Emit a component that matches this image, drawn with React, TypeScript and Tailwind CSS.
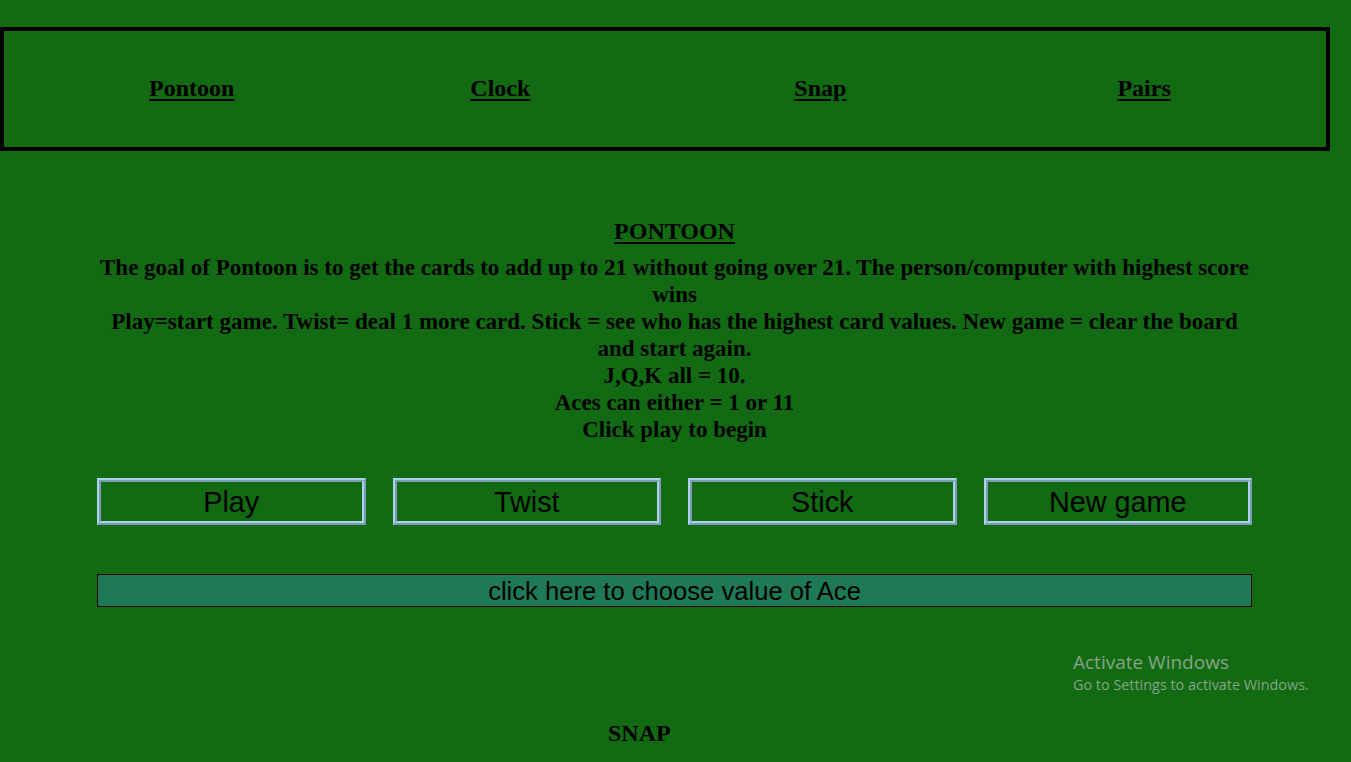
import React from "react";

const serif = { fontFamily: '"Liberation Serif", "Times New Roman", serif' };

function GameButton({ label }: { label: string }) {
  return (
    <button
      className="h-[47px] border-2 border-t-[#a9d3e9] border-l-[#a9d3e9] border-r-[#7e9db5] border-b-[#7e9db5] bg-transparent p-0"
      style={{ fontFamily: '"Liberation Sans", Arial, sans-serif' }}
    >
      <span className="flex h-full w-full items-center justify-center border-2 border-t-[#7e9db5] border-l-[#7e9db5] border-r-[#a9d3e9] border-b-[#a9d3e9] pt-[2px] text-[28.8px] leading-none text-black">
        {label}
      </span>
    </button>
  );
}

export default function App() {
  return (
    <div className="relative min-h-[762px] w-full overflow-hidden bg-[#126a12] text-black" style={serif}>
      <div className="pt-[27px]">
        <nav className="flex h-[124px] w-[1330px] items-center border-4 border-black pb-[2px]">
          <a href="#" className="ml-[145px] text-[24px] font-bold underline underline-offset-[3px]">Pontoon</a>
          <a href="#" className="ml-[236px] text-[24px] font-bold underline underline-offset-[3px]">Clock</a>
          <a href="#" className="ml-[264px] text-[24px] font-bold underline underline-offset-[3px]">Snap</a>
          <a href="#" className="ml-[271px] text-[24px] font-bold underline underline-offset-[3px]">Pairs</a>
        </nav>
      </div>

      <section className="ml-[97px] w-[1155px]">
        <h2 className="mt-[67px] text-center text-[24px] font-bold leading-[27px] underline underline-offset-[3px]">PONTOON</h2>
        <div className="mt-[9px] text-center text-[23px] font-bold leading-[27px]">
          <p>The goal of Pontoon is to get the cards to add up to 21 without going over 21. The person/computer with highest score wins</p>
          <p>Play=start game. Twist= deal 1 more card. Stick = see who has the highest card values. New game = clear the board and start again.</p>
          <p>J,Q,K all = 10.</p>
          <p>Aces can either = 1 or 11</p>
          <p>Click play to begin</p>
        </div>

        <div className="mt-[35px] grid grid-cols-4 gap-[27px]">
          <GameButton label="Play" />
          <GameButton label="Twist" />
          <GameButton label="Stick" />
          <GameButton label="New game" />
        </div>

        <button
          className="mt-[49px] flex h-[33px] w-full items-center justify-center border border-black bg-[#1e7a55] pt-[2px] text-[25.6px] leading-none text-black"
          style={{ fontFamily: '"Liberation Sans", Arial, sans-serif' }}
        >
          click here to choose value of Ace
        </button>
      </section>

      <h2 className="mt-[113px] pl-[608px] text-[24px] font-bold leading-[27px]">SNAP</h2>

      <div
        className="pointer-events-none absolute left-[1073px] top-[650px] text-[#86a486]"
        style={{ fontFamily: '"Open Sans", "Noto Sans", sans-serif' }}
      >
        <div className="text-[19px] leading-[24px]">Activate Windows</div>
        <div className="text-[14.4px] leading-[22px]">Go to Settings to activate Windows.</div>
      </div>
    </div>
  );
}
